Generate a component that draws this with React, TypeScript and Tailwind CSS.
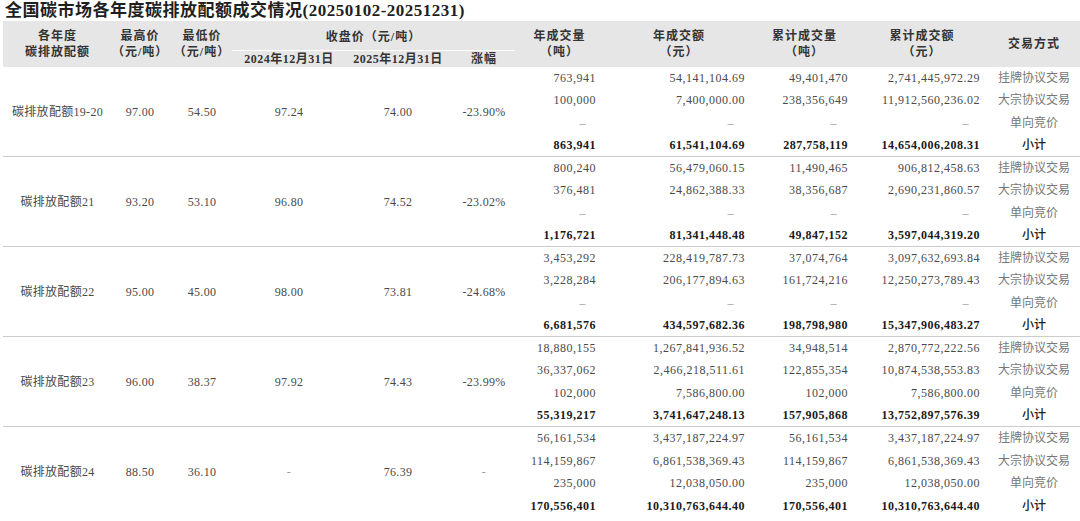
type Row = [string, string, string, string];

interface Group {
  name: string;
  high: string;
  low: string;
  close24: string;
  close25: string;
  change: string;
  rows: Row[];
}

const methods = ["挂牌协议交易", "大宗协议交易", "单向竞价", "小计"];
const dash: Row = ["-", "-", "-", "-"];

const groups: Group[] = [
  {
    name: "碳排放配额19-20",
    high: "97.00",
    low: "54.50",
    close24: "97.24",
    close25: "74.00",
    change: "-23.90%",
    rows: [
      ["763,941", "54,141,104.69", "49,401,470", "2,741,445,972.29"],
      ["100,000", "7,400,000.00", "238,356,649", "11,912,560,236.02"],
      dash,
      ["863,941", "61,541,104.69", "287,758,119", "14,654,006,208.31"],
    ],
  },
  {
    name: "碳排放配额21",
    high: "93.20",
    low: "53.10",
    close24: "96.80",
    close25: "74.52",
    change: "-23.02%",
    rows: [
      ["800,240", "56,479,060.15", "11,490,465", "906,812,458.63"],
      ["376,481", "24,862,388.33", "38,356,687", "2,690,231,860.57"],
      dash,
      ["1,176,721", "81,341,448.48", "49,847,152", "3,597,044,319.20"],
    ],
  },
  {
    name: "碳排放配额22",
    high: "95.00",
    low: "45.00",
    close24: "98.00",
    close25: "73.81",
    change: "-24.68%",
    rows: [
      ["3,453,292", "228,419,787.73", "37,074,764", "3,097,632,693.84"],
      ["3,228,284", "206,177,894.63", "161,724,216", "12,250,273,789.43"],
      dash,
      ["6,681,576", "434,597,682.36", "198,798,980", "15,347,906,483.27"],
    ],
  },
  {
    name: "碳排放配额23",
    high: "96.00",
    low: "38.37",
    close24: "97.92",
    close25: "74.43",
    change: "-23.99%",
    rows: [
      ["18,880,155", "1,267,841,936.52", "34,948,514", "2,870,772,222.56"],
      ["36,337,062", "2,466,218,511.61", "122,855,354", "10,874,538,553.83"],
      ["102,000", "7,586,800.00", "102,000", "7,586,800.00"],
      ["55,319,217", "3,741,647,248.13", "157,905,868", "13,752,897,576.39"],
    ],
  },
  {
    name: "碳排放配额24",
    high: "88.50",
    low: "36.10",
    close24: "-",
    close25: "76.39",
    change: "-",
    rows: [
      ["56,161,534", "3,437,187,224.97", "56,161,534", "3,437,187,224.97"],
      ["114,159,867", "6,861,538,369.43", "114,159,867", "6,861,538,369.43"],
      ["235,000", "12,038,050.00", "235,000", "12,038,050.00"],
      ["170,556,401", "10,310,763,644.40", "170,556,401", "10,310,763,644.40"],
    ],
  },
];

const cols =
  "grid grid-cols-[109px_56px_68px_106px_112px_60px_91px_148px_103px_132px_92px]";

// left block: 6 columns, each spanning all four rows of a group
const leftCol = ["col-start-1", "col-start-2", "col-start-3", "col-start-4", "col-start-5", "col-start-6"];
// right block: 4 number columns + 交易方式
const rightCol = ["col-start-7", "col-start-8", "col-start-9", "col-start-10"];
const rowStart = ["row-start-1", "row-start-2", "row-start-3", "row-start-4"];

function HeadCell({ top, bottom }: { top: string; bottom?: string }) {
  return (
    <div className="row-span-2 flex flex-col items-center justify-center leading-[16px]">
      <span>{top}</span>
      {bottom && <span>{bottom}</span>}
    </div>
  );
}

function GroupBlock({ g, last }: { g: Group; last: boolean }) {
  const left = [g.name, g.high, g.low, g.close24, g.close25, g.change];
  return (
    <div className={`${cols} grid-rows-4 h-[90px] ${last ? "" : "border-b border-[#cccccc]"}`}>
      {left.map((v, i) => (
        <div
          key={i}
          className={`${leftCol[i]} row-start-1 row-span-4 flex items-center justify-center tracking-[0.3px] ${
            v === "-" ? "text-[#999]" : "text-[#4a4a4a]"
          }`}
        >
          {v}
        </div>
      ))}
      {g.rows.map((r, ri) => {
        const total = ri === 3;
        return [
          ...r.map((v, ci) => (
            <div
              key={`${ri}-${ci}`}
              className={`${rightCol[ci]} ${rowStart[ri]} flex items-center justify-end tracking-[0.5px] ${
                v === "-" ? "pr-[19px]" : ci === 0 ? "pr-[9px]" : "pr-[8px]"
              } ${total ? "font-bold text-[#1a1a1a]" : v === "-" ? "text-[#999]" : "text-[#4a4a4a]"}`}
            >
              {v === "-" ? "–" : v}
            </div>
          )),
          <div
            key={`${ri}-m`}
            className={`col-start-11 ${rowStart[ri]} flex items-center justify-center ${
              total ? "font-medium text-[#222]" : "text-[#777]"
            }`}
          >
            {methods[ri]}
          </div>,
        ];
      })}
    </div>
  );
}

export default function App() {
  return (
    <div className="w-[1080px] h-[521px] bg-white overflow-hidden text-[12px] font-['Liberation_Serif','Noto_Sans_CJK_SC',serif]">
      <div className="h-[21px] pl-[5px] flex items-center text-[17px] font-bold text-[#1f1f1f] tracking-[0.5px] leading-none">
        全国碳市场各年度碳排放配额成交情况(20250102-20251231)
      </div>
      <div className="pl-[3px]">
        <div className={`${cols} grid-rows-[30px_16px] h-[46px] bg-[#e6e6e6] font-bold text-[#333] tracking-[1px]`}>
          <HeadCell top="各年度" bottom="碳排放配额" />
          <HeadCell top="最高价" bottom="（元/吨）" />
          <HeadCell top="最低价" bottom="（元/吨）" />
          <div className="col-span-3 flex items-center justify-center border-b border-white -ml-[4px] mr-[-1px] pt-[2px]">
            收盘价（元/吨）
          </div>
          <HeadCell top="年成交量" bottom="（吨）" />
          <HeadCell top="年成交额" bottom="（元）" />
          <HeadCell top="累计成交量" bottom="（吨）" />
          <HeadCell top="累计成交额" bottom="（元）" />
          <HeadCell top="交易方式" />
          <div className="col-start-4 row-start-2 flex items-center justify-center tracking-[0.5px]">
            2024年12月31日
          </div>
          <div className="col-start-5 row-start-2 flex items-center justify-center tracking-[0.5px]">
            2025年12月31日
          </div>
          <div className="col-start-6 row-start-2 flex items-center justify-center">涨幅</div>
        </div>
        {groups.map((g, i) => (
          <GroupBlock key={g.name} g={g} last={i === groups.length - 1} />
        ))}
      </div>
    </div>
  );
}
